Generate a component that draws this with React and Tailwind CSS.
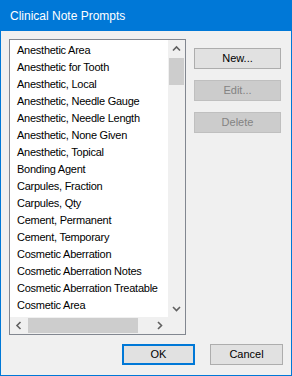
import React from 'react';

const items = [
  'Anesthetic Area',
  'Anesthetic for Tooth',
  'Anesthetic, Local',
  'Anesthetic, Needle Gauge',
  'Anesthetic, Needle Length',
  'Anesthetic, None Given',
  'Anesthetic, Topical',
  'Bonding Agent',
  'Carpules, Fraction',
  'Carpules, Qty',
  'Cement, Permanent',
  'Cement, Temporary',
  'Cosmetic Aberration',
  'Cosmetic Aberration Notes',
  'Cosmetic Aberration Treatable',
  'Cosmetic Area',
];

const Chevron = ({ dir }) => {
  const pts = {
    up: '1,5.5 4.5,2 8,5.5',
    down: '1,2 4.5,5.5 8,2',
    left: '5.5,1 2,4.5 5.5,8',
    right: '2,1 5.5,4.5 2,8',
  }[dir];
  const vertical = dir === 'up' || dir === 'down';
  return (
    <svg width={vertical ? 9 : 7} height={vertical ? 7 : 9} viewBox={vertical ? '0 0 9 7' : '0 0 7 9'}>
      <polyline points={pts} fill="none" stroke="#606060" strokeWidth="1.6" />
    </svg>
  );
};

const Button = ({ children, disabled, focused, className = '' }) => {
  const look = disabled
    ? 'bg-[#cccccc] border border-[#bfbfbf] text-[#838383]'
    : focused
      ? 'bg-[#e1e1e1] border-2 border-[#0078d7] text-black'
      : 'bg-[#e1e1e1] border border-[#adadad] text-black';
  return (
    <div className={`h-[21px] flex items-center justify-center text-[11px] leading-none ${look} ${className}`}>
      {children}
    </div>
  );
};

export default function App() {
  return (
    <div className="w-[292px] h-[376px] flex flex-col bg-[#f0f0f0] font-['Liberation_Sans',Arial,sans-serif] select-none">
      <div className="h-[31px] shrink-0 bg-[#0078d7] flex items-center pl-[10px] pt-[1px] text-white text-[12px]">
        Clinical Note Prompts
      </div>
      <div className="flex-1 flex flex-col border-x border-b border-[#0078d7] px-[8px] pt-[8px]">
        <div className="flex">
          <div className="w-[177px] h-[296px] border border-[#828790] bg-white grid grid-cols-[1fr_17px] grid-rows-[1fr_17px]">
            <div className="overflow-hidden pt-[2px] pl-[7px] text-[11px] tracking-[-0.25px] text-black">
              {items.map((t) => (
                <div key={t} className="h-[17px] leading-[17px] whitespace-nowrap">
                  {t}
                </div>
              ))}
            </div>
            <div className="bg-[#f0f0f0] flex flex-col">
              <div className="h-[17px] flex items-center justify-center">
                <Chevron dir="up" />
              </div>
              <div className="mx-[1px] mt-[1px] h-[27px] bg-[#cdcdcd]" />
              <div className="flex-1" />
              <div className="h-[17px] flex items-center justify-center">
                <Chevron dir="down" />
              </div>
            </div>
            <div className="bg-[#f0f0f0] flex items-stretch">
              <div className="w-[17px] flex items-center justify-center">
                <Chevron dir="left" />
              </div>
              <div className="my-[1px] ml-[1px] w-[110px] bg-[#cdcdcd]" />
              <div className="flex-1" />
              <div className="w-[17px] flex items-center justify-center">
                <Chevron dir="right" />
              </div>
            </div>
            <div className="bg-[#f0f0f0]" />
          </div>
          <div className="ml-[8px] pt-[9px] flex flex-col gap-[11px]">
            <Button className="w-[87px]">New...</Button>
            <Button className="w-[87px]" disabled>Edit...</Button>
            <Button className="w-[87px]" disabled>Delete</Button>
          </div>
        </div>
        <div className="flex justify-end gap-[15px] mt-[9px]">
          <Button className="w-[73px]" focused>OK</Button>
          <Button className="w-[73px]">Cancel</Button>
        </div>
      </div>
    </div>
  );
}
